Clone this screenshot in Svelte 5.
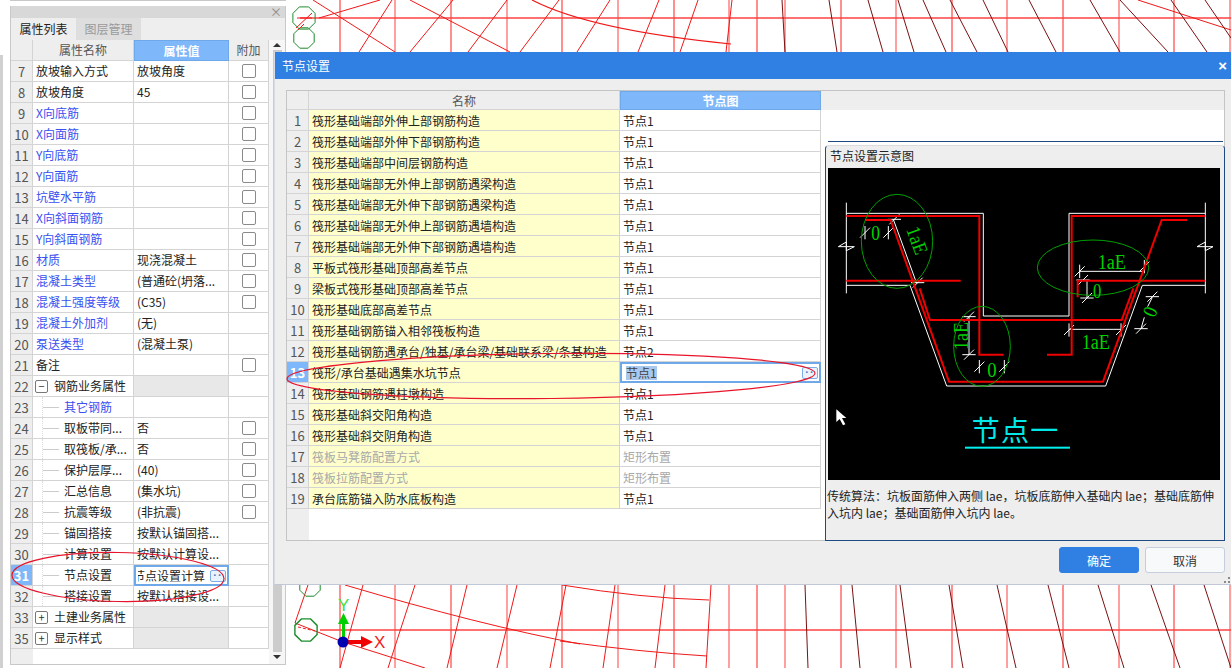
<script>
	const props = [
		{ n: 7, name: '放坡输入方式', value: '放坡角度', check: true },
		{ n: 8, name: '放坡角度', value: '45', check: true },
		{ n: 9, name: 'X向底筋', blue: true, check: true },
		{ n: 10, name: 'X向面筋', blue: true, check: true },
		{ n: 11, name: 'Y向底筋', blue: true, check: true },
		{ n: 12, name: 'Y向面筋', blue: true, check: true },
		{ n: 13, name: '坑壁水平筋', blue: true, check: true },
		{ n: 14, name: 'X向斜面钢筋', blue: true, check: true },
		{ n: 15, name: 'Y向斜面钢筋', blue: true, check: true },
		{ n: 16, name: '材质', value: '现浇混凝土', blue: true, check: true },
		{ n: 17, name: '混凝土类型', value: '(普通砼(坍落...', blue: true, check: true },
		{ n: 18, name: '混凝土强度等级', value: '(C35)', blue: true, check: true },
		{ n: 19, name: '混凝土外加剂', value: '(无)', blue: true },
		{ n: 20, name: '泵送类型', value: '(混凝土泵)', blue: true },
		{ n: 21, name: '备注', check: true },
		{ n: 22, name: '钢筋业务属性', group: '-' },
		{ n: 23, name: '其它钢筋', blue: true, child: true },
		{ n: 24, name: '取板带同...', value: '否', child: true, check: true },
		{ n: 25, name: '取筏板/承...', value: '否', child: true, check: true },
		{ n: 26, name: '保护层厚...', value: '(40)', child: true, check: true },
		{ n: 27, name: '汇总信息', value: '(集水坑)', child: true, check: true },
		{ n: 28, name: '抗震等级', value: '(非抗震)', child: true, check: true },
		{ n: 29, name: '锚固搭接', value: '按默认锚固搭...', child: true },
		{ n: 30, name: '计算设置', value: '按默认计算设...', child: true },
		{ n: 31, name: '节点设置', value: '节点设置计算', child: true, active: true },
		{ n: 32, name: '搭接设置', value: '按默认搭接设...', child: true },
		{ n: 33, name: '土建业务属性', group: '+' },
		{ n: 35, name: '显示样式', group: '+' }
	];

	const nodes = [
		'筏形基础端部外伸上部钢筋构造',
		'筏形基础端部外伸下部钢筋构造',
		'筏形基础端部中间层钢筋构造',
		'筏形基础端部无外伸上部钢筋遇梁构造',
		'筏形基础端部无外伸下部钢筋遇梁构造',
		'筏形基础端部无外伸上部钢筋遇墙构造',
		'筏形基础端部无外伸下部钢筋遇墙构造',
		'平板式筏形基础顶部高差节点',
		'梁板式筏形基础顶部高差节点',
		'筏形基础底部高差节点',
		'筏形基础钢筋锚入相邻筏板构造',
		'筏形基础钢筋遇承台/独基/承台梁/基础联系梁/条基构造',
		'筏形/承台基础遇集水坑节点',
		'筏形基础钢筋遇柱墩构造',
		'筏形基础斜交阳角构造',
		'筏形基础斜交阴角构造',
		'筏板马凳筋配置方式',
		'筏板拉筋配置方式',
		'承台底筋锚入防水底板构造'
	];
	const nodeValue = (i) => (i === 11 ? '节点2' : i === 16 || i === 17 ? '矩形布置' : '节点1');

	// background drawing
	const verticals = [340, 395, 451, 507, 562, 618, 674, 729, 757, 785, 841, 896, 952, 1007, 1063, 1119, 1174, 1230];
	const redLines = [
		[319, 18, 380, 0], [313, 0, 395, 52], [410, 0, 510, 52], [392, 0, 359, 52], [453, 0, 410, 52],
		[507, 0, 468, 52], [559, 0, 520, 52], [610, 0, 577, 52], [659, 0, 638, 52], [698, 0, 680, 52],
		[732, 0, 726, 52], [1138, 0, 1231, 30],
		[363, 585, 340, 668], [415, 585, 388, 668], [467, 585, 447, 668], [517, 585, 497, 668],
		[566, 585, 550, 668], [615, 585, 603, 668], [665, 585, 655, 668], [711, 585, 706, 668],
		[295, 623, 343, 642], [343, 642, 425, 668], [295, 623, 308, 585]
	];
	const darkLines = [
		[782, 0, 785, 52], [829, 0, 837, 52], [868, 0, 883, 52], [898, 0, 914, 52], [923, 0, 946, 52],
		[950, 0, 977, 52], [983, 0, 1008, 52], [1029, 0, 1056, 52], [1090, 0, 1120, 52], [1120, 0, 1168, 52],
		[1171, 0, 1207, 52], [1205, 0, 1231, 38],
		[805, 585, 808, 668], [852, 585, 860, 668], [900, 585, 911, 668], [949, 585, 963, 668],
		[997, 585, 1016, 668], [1048, 585, 1069, 668], [1098, 585, 1124, 668], [1151, 585, 1180, 668],
		[1204, 585, 1231, 668]
	];
	const hex = (cx, cy, r) =>
		Array.from({ length: 8 }, (_, i) => {
			const a = (Math.PI / 4) * i + Math.PI / 8;
			return `${(cx + r * Math.cos(a)).toFixed(1)},${(cy + r * Math.sin(a)).toFixed(1)}`;
		}).join(' ');

	// node diagram, in 3x coordinates of the black area. v: tick across a horizontal dim line
	const ticks = [
		[120, 218, 1], [190, 218, 1], [208, 178, 0], [278, 368, 0], [432, 470, 0], [432, 584, 0], [463, 620, 1], [538, 620, 1],
		[764, 334, 1], [958, 320, 1], [774, 360, 0], [786, 414, 0], [732, 510, 1], [888, 510, 1], [982, 410, 0], [948, 506, 0]
	];
	const dims = [
		[432, 470, 432, 584], [764, 334, 958, 334],
		[786, 362, 786, 414], [732, 508, 888, 508], [982, 412, 968, 440], [948, 506, 958, 472]
	];
	const tickPath = (t) =>
		`M${t[0] - 15} ${t[1] + 15}L${t[0] + 15} ${t[1] - 15}` +
		(t[2] ? `M${t[0]} ${t[1] - 20}V${t[1] + 20}` : `M${t[0] - 20} ${t[1]}H${t[0] + 20}`);
</script>

<div class="page">
	<svg class="cad" viewBox="0 0 1231 668" width="1231" height="668">
		{#each verticals as x, i}
			<line x1={x} y1="0" x2={x} y2="668" stroke={i % 2 ? '#ff8080' : '#ff2020'} stroke-width={i % 2 ? 1.5 : 1} />
		{/each}
		<line x1="300" y1="18" x2="1231" y2="18" stroke="#ff4040" stroke-width="1.5" />
		<line x1="320" y1="630" x2="1231" y2="630" stroke="#ff4040" stroke-width="1.5" />
		{#each redLines as l}
			<line x1={l[0]} y1={l[1]} x2={l[2]} y2={l[3]} stroke="#f01818" />
		{/each}
		{#each darkLines as l}
			<line x1={l[0]} y1={l[1]} x2={l[2]} y2={l[3]} stroke="#7a1010" />
		{/each}
		<path d="M532 0Q590 30 731 44" fill="none" stroke="#f01818" stroke-width="1.2" />
		<path d="M345 585Q480 625 580 644" fill="none" stroke="#f01818" />
		<path d="M562 585Q640 598 709 600M560 641Q640 652 707 656" fill="none" stroke="#f01818" />
		<polygon points={hex(304, 18, 12)} fill="none" stroke="#1c8c2c" />
		<polygon points={hex(304, 38, 11)} fill="none" stroke="#1c8c2c" />
		<polygon points={hex(310, 586, 11)} fill="none" stroke="#1c8c2c" />
		<polygon points={hex(306, 630, 12)} fill="none" stroke="#1c8c2c" stroke-width="1.4" />
		<path d="M297 18H312M312 13L296 28M304 24L298 30" stroke="#f01818" fill="none" />
		<path d="M298 627L315 631" stroke="#f01818" stroke-dasharray="3 2" />
		<rect x="342" y="622" width="3" height="20" fill="#00d000" />
		<polygon points="343.5,613 349,624 338,624" fill="#00d000" />
		<rect x="343" y="640" width="20" height="4" fill="#f00000" />
		<polygon points="373,642 361,636 361,648" fill="#f00000" />
		<circle cx="343" cy="642" r="5.5" fill="#0000b0" />
		<text class="axis" x="338" y="611" fill="#40e040">Y</text>
		<text class="axis" x="374" y="648" fill="#f02020">X</text>
	</svg>

	<aside class="side">
		<div class="side-head"><span class="close">×</span></div>
		<div class="tabs">
			<span class="tab current">属性列表</span>
			<span class="tab">图层管理</span>
		</div>
		<div class="side-body">
			<div class="prop-table">
				<div class="prow head">
					<span class="num"></span>
					<span class="cell center">属性名称</span>
					<span class="cell center picked">属性值</span>
					<span class="cell center">附加</span>
				</div>
				{#each props as p}
					<div class="prow">
						<span class="num" class:num-on={p.active}>{p.n}</span>
						<span class="cell pname" class:blue={p.blue} class:kid={p.child} class:grp={p.group}>
							{#if p.group}<i class="box">{p.group === '+' ? '+' : '−'}</i>{/if}
							{#if p.child}<i class="tree"></i>{/if}
							{p.name}
						</span>
						{#if p.active}
							<span class="cell pvalue editing">
								<span class="cut">{p.value}</span>
								<b class="more">··</b>
							</span>
						{:else}
							<span class="cell pvalue" class:shaded={p.group}>{p.value ?? ''}</span>
						{/if}
						<span class="cell center">{#if p.check}<i class="checkbox"></i>{/if}</span>
					</div>
				{/each}
				<div class="table-foot"><span class="num"></span></div>
			</div>
			<div class="scroll">
				<i class="arrow up"></i>
				<i class="thumb"></i>
				<i class="arrow down"></i>
			</div>
		</div>
	</aside>

	<section class="dialog">
		<header class="titlebar">
			<span>节点设置</span>
			<span class="dlg-close">×</span>
		</header>
		<div class="node-table">
			<div class="list">
				<div class="nrow nhead">
					<span class="num"></span>
					<span class="ncell center">名称</span>
					<span class="ncell center picked">节点图</span>
				</div>
				{#each nodes as name, i}
					<div class="nrow">
						<span class="num" class:num-on={i === 12}>{i + 1}</span>
						<span class="ncell nname" class:muted={i === 16 || i === 17}>{name}</span>
						{#if i === 12}
							<span class="ncell editing">
								<span class="sel">{nodeValue(i)}</span>
								<b class="more push">··</b>
							</span>
						{:else}
							<span class="ncell" class:muted={i === 16 || i === 17}>{nodeValue(i)}</span>
						{/if}
					</div>
				{/each}
				<div class="list-foot"><span class="num"></span></div>
			</div>
			<div class="aside">
				<div class="aside-head"></div>
				<div class="aside-gap"></div>
				<div class="rule"></div>
				<div class="preview">
					<div class="preview-title">节点设置示意图</div>
					<svg class="diagram" viewBox="9 24 1176 936" width="392" height="312">
						<rect x="9" y="24" width="1176" height="936" fill="#000" />
						<g fill="none" stroke="#fff" stroke-width="3">
							<path d="M64 128V400M1141 128V400" />
							<path d="M64 160H475V468H732V160H1141" />
							<path d="M64 376H255L365 678H842L952 376H1141" />
							<path d="M40 260L64 246V272L88 260H40M1116 260L1141 246V272L1164 260H1116" />
							<path d="M205 178L275 370" />
							{#each dims as d}
								<line x1={d[0]} y1={d[1]} x2={d[2]} y2={d[3]} />
							{/each}
							{#each ticks as t}
								<path d={tickPath(t)} />
							{/each}
						</g>
						<g fill="none" stroke="#f00000" stroke-width="6">
							<path d="M64 168H463V584H536" />
							<path d="M120 180H197L372 665H834L1010 180H1086" />
							<path d="M64 362H407" />
							<path d="M284 385L315 480H890L925 385" />
							<path d="M1141 362H758V412" />
							<path d="M1141 168H740V584H666" />
						</g>
						<g fill="none" stroke="#00a000" stroke-width="3">
							<ellipse cx="216" cy="244" rx="107" ry="141" />
							<ellipse cx="804" cy="323" rx="167" ry="83" />
							<ellipse cx="471" cy="559" rx="85" ry="120" />
						</g>
						<g class="dim-text" fill="#00d000">
							<text x="139" y="240" textLength="26" lengthAdjust="spacingAndGlyphs">0</text>
							<text x="487" y="651" textLength="28" lengthAdjust="spacingAndGlyphs">0</text>
							<text x="804" y="415" textLength="25" lengthAdjust="spacingAndGlyphs">0</text>
							<text x="818" y="328" textLength="85" lengthAdjust="spacingAndGlyphs">1aE</text>
							<text x="770" y="568" textLength="85" lengthAdjust="spacingAndGlyphs">1aE</text>
							<text transform="translate(243 208) rotate(70)" textLength="85" lengthAdjust="spacingAndGlyphs">1aE</text>
							<text transform="translate(430 570) rotate(-90)" textLength="84" lengthAdjust="spacingAndGlyphs">1aE</text>
							<text transform="translate(989 475) rotate(-68)" textLength="26" lengthAdjust="spacingAndGlyphs">0</text>
						</g>
						<text class="label" x="440" y="842" fill="#00e8e8">节点一</text>
						<rect x="420" y="860" width="315" height="6" fill="#00f0f0" />
						<polygon points="34,748 34,786 44,777 54,796 61,793 51,774 64,774" fill="#fff" />
					</svg>
					<p class="note">传统算法：坑板面筋伸入两侧 lae，坑板底筋伸入基础内 lae；基础底筋伸入坑内 lae；基础面筋伸入坑内 lae。</p>
				</div>
			</div>
		</div>
		<footer class="actions">
			<button class="primary">确定</button>
			<button>取消</button>
		</footer>
		<i class="grip"></i>
	</section>

	<svg class="marks" viewBox="0 0 1231 668" width="1231" height="668">
		<ellipse cx="118" cy="577" rx="106" ry="24.5" transform="rotate(1 118 577)" />
		<ellipse cx="551" cy="376" rx="264" ry="22.5" transform="rotate(-.6 551 376)" />
	</svg>
</div>

<style>
	:global(body) {
		margin: 0;
		background: #fff;
	}

	.page {
		position: relative;
		width: 1231px;
		height: 668px;
		overflow: hidden;
		background: #fff;
		font: 12px/1 'Noto Sans CJK SC', 'Noto Sans', sans-serif;
		color: #222;
		display: flex;
		align-items: flex-start;
	}

	.page::before {
		content: '';
		width: 3px;
		height: 613px;
		margin-top: 55px;
		margin-right: 7px;
		background: #d0d0d0;
		flex: none;
	}

	.cad,
	.marks {
		position: absolute;
		left: 0;
		top: 0;
	}

	.marks {
		pointer-events: none;
	}

	.marks ellipse {
		fill: none;
		stroke: #e8142c;
		stroke-width: 1.2;
	}

	.axis {
		font: 17px 'Liberation Sans', sans-serif;
	}

	.side {
		position: relative;
		width: 276px;
		height: 659px;
		margin-top: 6px;
		box-sizing: border-box;
		border: 1px solid #c8c8c8;
		border-top: 0;
		background: #fff;
		display: flex;
		flex-direction: column;
		box-shadow: 0 -5px 0 #fff, 0 -6px 0 #c8c8c8;
	}

	.side-head {
		height: 12px;
		background: #d8d8d8;
		display: flex;
		justify-content: flex-end;
		align-items: center;
		padding-right: 3px;
	}

	.close {
		font-size: 12px;
		color: #8a8a8a;
	}

	.tabs {
		height: 22px;
		background: #eeeeee;
		display: flex;
		box-sizing: border-box;
	}

	.tab {
		width: 65px;
		display: flex;
		align-items: center;
		justify-content: center;
		background: #dedede;
		color: #9a9a9a;
		font-size: 12px;
	}

	.tab.current {
		background: #eeeeee;
		color: #222;
	}

	.side-body {
		flex: 1;
		display: flex;
		min-height: 0;
	}

	.prop-table {
		width: 258px;
		display: flex;
		flex-direction: column;
		flex: none;
	}

	.prow {
		display: grid;
		grid-template-columns: 22px 101px 95px 40px;
		height: 21px;
		flex: none;
	}

	.num {
		display: flex;
		align-items: center;
		justify-content: center;
		background: #eeeeee;
		color: #555;
		font-size: 13px;
		border-right: 1px solid #d4d4d4;
		border-bottom: 1px solid #d4d4d4;
		box-sizing: border-box;
	}

	.num-on {
		background: #7eb8fa;
		color: #fff;
		font-weight: 700;
	}

	.cell {
		display: flex;
		align-items: center;
		padding-left: 3px;
		border-right: 1px solid #d4d4d4;
		border-bottom: 1px solid #d4d4d4;
		box-sizing: border-box;
		white-space: nowrap;
		overflow: hidden;
		min-width: 0;
	}

	.center {
		justify-content: center;
		padding-left: 0;
	}

	.head .cell,
	.head .num {
		background: #eeeeee;
		color: #555;
	}

	.blue {
		color: #3a4ff0;
	}

	.pname {
		position: relative;
	}

	.kid {
		padding-left: 31px;
	}

	.grp {
		gap: 6px;
		padding-left: 2px;
	}

	.tree {
		position: absolute;
		left: 9px;
		top: 0;
		bottom: 0;
		width: 16px;
		border-left: 1px dotted #ddd;
	}

	.tree::after {
		content: '';
		position: absolute;
		left: 0;
		top: 10px;
		width: 16px;
		border-top: 1px solid #ccc;
	}

	.box {
		width: 11px;
		height: 11px;
		border: 1px solid #777;
		border-radius: 2px;
		display: flex;
		align-items: center;
		justify-content: center;
		font-style: normal;
		font-size: 11px;
		color: #333;
		flex: none;
	}

	.shaded {
		background: #e8e8e8;
	}

	.checkbox {
		width: 12px;
		height: 12px;
		border: 1px solid #8a8a8a;
		border-radius: 2px;
		background: #fff;
	}

	.cell.editing,
	.ncell.editing {
		border: 2px solid #6ea8e8;
		display: flex;
		align-items: center;
		justify-content: space-between;
		padding: 0 1px;
	}

	.cut {
		margin-left: -4px;
		clip-path: inset(0 0 0 5px);
	}

	.more {
		width: 16px;
		height: 12px;
		flex: none;
		display: flex;
		align-items: center;
		justify-content: center;
		border: 1px solid #7eaee8;
		border-radius: 2px;
		background: #eaf3fd;
		color: #4a80c0;
		font: 700 11px/1 'Liberation Sans', sans-serif;
		letter-spacing: 1px;
		box-sizing: border-box;
	}

	.table-foot {
		flex: 1;
		display: flex;
	}

	.table-foot .num {
		width: 22px;
		border: 0;
	}

	.scroll {
		flex: 1;
		position: relative;
		display: flex;
		flex-direction: column;
		align-items: center;
		padding-top: 3px;
		gap: 3px;
		background: #f6f6f6;
	}

	.arrow {
		width: 0;
		height: 0;
		border-left: 4px solid transparent;
		border-right: 4px solid transparent;
		flex: none;
	}

	.up {
		border-bottom: 4px solid #333;
	}

	.down {
		border-top: 4px solid #333;
		margin-bottom: 5px;
	}

	.thumb {
		width: 9px;
		flex: 1;
		background: #cccccc;
	}

	.dialog {
		position: absolute;
		left: 274px;
		top: 52px;
		width: 957px;
		height: 533px;
		background: #eeeeee;
		border-bottom: 1px solid #c0c8d8;
		border-left: 1px solid #d8dce4;
		box-sizing: border-box;
		display: flex;
		flex-direction: column;
	}

	.titlebar {
		height: 27px;
		flex: none;
		background: #2f80e2;
		color: #fff;
		display: flex;
		align-items: center;
		justify-content: space-between;
		padding: 0 4px 0 7px;
		font-size: 12px;
	}

	.dlg-close {
		font: 700 15px 'Liberation Sans', sans-serif;
	}

	.node-table {
		margin: 11px 6px 0 11px;
		height: 451px;
		box-sizing: border-box;
		border: 1px solid #c4c4c4;
		background: #fff;
		display: flex;
		flex: none;
	}

	.list {
		width: 534px;
		flex: none;
		display: flex;
		flex-direction: column;
	}

	.nrow {
		display: grid;
		grid-template-columns: 22px 311px 201px;
		height: 21px;
		flex: none;
	}

	.nhead {
		height: 19px;
	}

	.nhead .num,
	.nhead .ncell {
		background: #eeeeee;
		color: #555;
	}

	.ncell {
		display: flex;
		align-items: center;
		padding: 1px 0 0 3px;
		border-right: 1px solid #d4d4d4;
		border-bottom: 1px solid #d4d4d4;
		box-sizing: border-box;
		white-space: nowrap;
		min-width: 0;
	}

	.ncell.center {
		padding-left: 0;
		justify-content: center;
	}

	.head .picked,
	.nhead .ncell.picked {
		background: #7eb8fa;
		color: #fff;
		font-weight: 700;
		border: 1px solid #6ea8e8;
	}

	.nname {
		background: #ffffcc;
	}

	.muted {
		color: #a8a8a8;
	}

	.sel {
		background: #a9c8ee;
		color: #444;
		padding: 1px 0;
		margin-left: 3px;
	}

	.push {
		margin-left: auto;
	}

	.list-foot {
		flex: 1;
		display: flex;
	}

	.list-foot .num {
		width: 22px;
		border: 0;
	}

	.aside {
		flex: 1;
		min-width: 0;
		display: flex;
		flex-direction: column;
	}

	.aside-head {
		height: 19px;
		background: #eeeeee;
		flex: none;
	}

	.aside-gap {
		height: 31px;
		flex: none;
	}

	.rule {
		height: 1px;
		flex: none;
		margin: 0 1px 0 7px;
		background: #1f4a80;
	}

	.preview {
		flex: 1;
		margin-top: 3px;
		margin-left: 4px;
		margin-right: -1px;
		margin-bottom: -1px;
		background: #eeeeee;
		border: 1px solid #1f4a80;
		border-top-color: #dcdcdc;
		border-radius: 4px 4px 0 0;
		box-sizing: border-box;
		display: flex;
		flex-direction: column;
		min-height: 0;
	}

	.preview-title {
		height: 22px;
		flex: none;
		display: flex;
		align-items: center;
		padding: 0 0 2px 4px;
		box-sizing: border-box;
	}

	.diagram {
		display: block;
		margin-left: 2px;
		flex: none;
	}

	.dim-text text {
		font: 60px 'Liberation Serif', serif;
	}

	.label {
		font: 84px 'Noto Sans CJK SC', sans-serif;
		letter-spacing: 4px;
	}

	.note {
		margin: 0;
		padding: 7px 2px 0 1px;
		font-size: 12px;
		line-height: 17px;
		color: #222;
	}

	.actions {
		display: flex;
		justify-content: flex-end;
		gap: 6px;
		margin-top: 6px;
		padding-right: 6px;
	}

	button {
		width: 80px;
		height: 26px;
		padding: 0;
		font: 12px 'Noto Sans CJK SC', sans-serif;
		color: #333;
		background: #f8f9fb;
		border: 1px solid #c6cede;
		border-radius: 3px;
	}

	.primary {
		background: #2f80e2;
		border-color: #2f80e2;
		color: #fff;
	}

	.grip {
		position: absolute;
		right: 1px;
		bottom: 1px;
		width: 6px;
		height: 6px;
		background:
			linear-gradient(#8a8a8a, #8a8a8a) 4px 0 / 2px 2px no-repeat,
			linear-gradient(#8a8a8a, #8a8a8a) 0 4px / 2px 2px no-repeat,
			linear-gradient(#8a8a8a, #8a8a8a) 4px 4px / 2px 2px no-repeat;
	}
</style>
